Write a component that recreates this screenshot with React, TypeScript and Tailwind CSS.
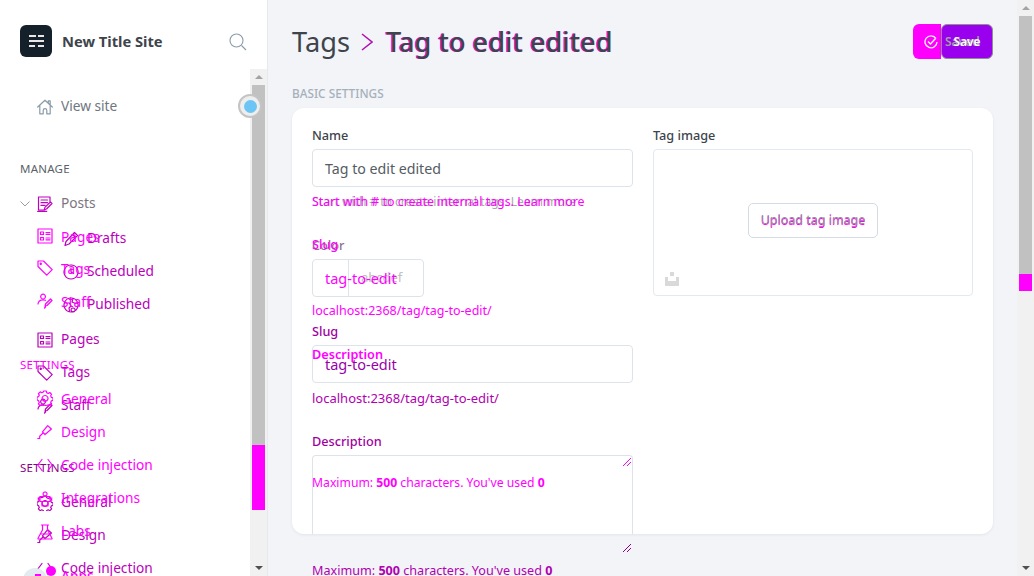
import type { ReactNode } from 'react'

const font = "font-['Noto_Sans',sans-serif]"

function Glyph({ name, className }: { name: string; className: string }) {
  const common = { fill: 'none', stroke: 'currentColor', strokeWidth: 1.2, strokeLinecap: 'round' as const, strokeLinejoin: 'round' as const }
  return (
    <svg viewBox="0 0 16 16" className={className} {...common}>
      {name === 'home' && <path d="M.7 8 8 1.2 15.300 8M2.800 6.500v8.300h3.400v-3.400a1.800 1.800 0 0 1 3.600 0v3.400h3.400V6.500M11.300 3.500V1.800h1.900v3.500" />}
      {name === 'post' && <path d="M13 6V1H1.500v13h6M4 4h6.500M4 6.700h6.500M4 9.400h4M15 7.500 9.500 13l-2.200.8.600-2.400 5.500-5.400ZM.7 15.400h9" />}
      {name === 'page' && <path d="M1 1h14v14H1ZM3.500 4h3v2.500h-3ZM3.500 9.500h3V12h-3ZM9 4.500h4M9 6.300h4M9 10h4M9 11.800h4" />}
      {name === 'tag' && <path d="M1 1h5.500l8.700 8.700-5.500 5.500L1 6.500ZM3.700 3.200a.6.6 0 1 0 .1 0" />}
      {name === 'staff' && <path d="M6 1.200a2.400 2.400 0 1 0 .1 0M1 11c.3-2.800 2-4.200 5-4.200 1 0 1.800.2 2.500.5M15 7.500l-5 5-2 .8.500-2.300 5-5ZM7.500 15l1-1" />}
      {name === 'pen' && <path d="M10.700 1.600 14.400 5 8 10.500 5.500 7.900ZM6 9l-3.300 3.200v2.300H.8" />}
      {name === 'gear' && <path d="m6.700 1 2.600 0 .4 1.700 1.600.7 1.500-.9 1.800 1.800-.9 1.500.7 1.600 1.600.4v2.600l-1.600.4-.7 1.600.9 1.500-1.800 1.800-1.500-.9-1.600.7-.4 1.600H6.700l-.4-1.600-1.600-.7-1.500.9-1.800-1.800.9-1.500-.7-1.600L0 9.700V7.100l1.600-.4.7-1.600-.9-1.500 1.800-1.800 1.500.9 1.600-.7ZM8 5.500a2.900 2.900 0 1 0 .1 0" />}
      {name === 'code' && <path d="M5 2.500 .8 8 5 13.500M11 2.500 15.200 8 11 13.500" />}
      {name === 'labs' && <path d="M4.500 1h7M5.500 1v5L1 14.200c-.3.500 0 .8.500.8h13c.5 0 .8-.3.5-.8L10.500 6V1M3.500 10h9" />}
      {name === 'int' && <path d="M8 1a2 2 0 1 0 .1 0M3 5.500h10v5H3ZM1 7h2M1 9h2M13 7h2M13 9h2M5 10.500V15h6v-4.500" />}
      {name === 'draft' && <path d="M11.500 1.500 14.500 4.500 6 13l-4 1.500L3 10.500ZM9.500 3.500l3 3" />}
      {name === 'clock' && <path d="M8 1a7 7 0 1 0 .1 0M8 4v4l2.500 1.500" />}
      {name === 'pub' && <path d="M8 1a7 7 0 1 0 .1 0M1.500 6h5l1.500 3-2 2 .5 3M10 1.500 9 5l3.500 1.500 2-.5M10 11a2 2 0 1 0 .1 0" />}
    </svg>
  )
}

function NavRow({ icon, label, tone, sub }: { icon: string; label: string; tone: string; sub?: boolean }) {
  return (
    <div className={`flex h-[33px] items-center ${tone} ${sub ? 'pl-[26px]' : ''}`}>
      <Glyph name={icon} className="h-4 w-4" />
      <span className="ml-[8px] text-[13.7px]">{label}</span>
    </div>
  )
}

function Ghost({ top, left, children, className = '' }: { top: number; left: number; children: ReactNode; className?: string }) {
  // overlay of the second capture, it sits on top of the page
  return (
    <div className={`absolute whitespace-nowrap text-[#ff00ff] ${className}`} style={{ top, left }}>
      {children}
    </div>
  )
}

function Scrollbar({ thumb, pink }: { thumb: string; pink: string }) {
  return (
    <div className="flex h-full w-[17px] shrink-0 flex-col items-center bg-[#f1f1f1]">
      <div className="flex h-4 items-center"><div className="h-0 w-0 border-x-[4px] border-b-[4px] border-x-transparent border-b-[#a3a3a3]" /></div>
      <div className={`w-[13px] bg-[#c1c1c1] ${thumb}`} />
      <div className={`w-[13px] bg-[#ff00ff] ${pink}`} />
      <div className="flex-1" />
      <div className="flex h-4 items-center"><div className="h-0 w-0 border-x-[4px] border-t-[4px] border-x-transparent border-t-[#505050]" /></div>
    </div>
  )
}

function Sidebar() {
  const mix = 'text-[#bb00bb]'
  return (
    <aside className="relative flex h-full w-[268px] shrink-0 flex-col overflow-hidden border-r border-[#e6e9ee] bg-white">
      <div className="flex h-[69px] shrink-0 items-start pl-5 pr-[20px] pt-[25px]">
        <div className="flex h-8 w-8 flex-col items-center justify-center gap-[3px] rounded-[6px] bg-[#15212a]">
          <div className="flex gap-[2px]"><i className="h-[2px] w-[7px] bg-[#e8e8e8]" /><i className="h-[2px] w-[6px] bg-[#e8e8e8]" /></div>
          <div className="h-[2px] w-[15px] bg-[#e8e8e8]" />
          <div className="flex gap-[3px]"><i className="h-[2px] w-[6px] bg-[#e8e8e8]" /><i className="h-[2px] w-[6px] bg-[#e8e8e8]" /></div>
        </div>
        <span className="ml-[10px] mt-[5px] text-[14.7px] font-bold text-[#3d444b]">New Title Site</span>
        <svg viewBox="0 0 18 18" className="ml-auto mt-2 h-[18px] w-[18px] text-[#8a9ba8]" fill="none" stroke="currentColor" strokeWidth="1.1"><circle cx="7.500" cy="7.500" r="6.500" /><path d="m12.500 12.500 4.500 4.500" /></svg>
      </div>
      <div className="flex min-h-0 flex-1">
        <nav className="relative min-w-0 flex-1 overflow-hidden pl-5 pt-[21px]">
          <div className="ml-[17px] flex h-[33px] items-center text-[#6f7780]">
            <Glyph name="home" className="h-4 w-4 text-[#8a9ba8]" />
            <span className="ml-[8px] text-[13.7px]">View site</span>
          </div>
          <div className="mt-[40px] flex h-[12px] items-center text-[11.5px] tracking-[0.02em] text-[#5b6269]">MANAGE</div>
          <div className="mt-[12px] flex h-[33px] items-center text-[#7c7580]">
            <svg viewBox="0 0 10 6" className="mr-[7px] h-[6px] w-[10px] text-[#a09aa5]" fill="none" stroke="currentColor"><path d="m.5.5 4.500 4.500L9.500.5" /></svg>
            <span className="text-[#c000c0]"><Glyph name="post" className="h-4 w-4" /></span>
            <span className="ml-[8px] text-[13.7px]">Posts</span>
          </div>
          <div className="ml-[17px]">
            <div className="mt-[2px]"><NavRow icon="draft" label="Drafts" tone={mix} sub /></div>
            <NavRow icon="clock" label="Scheduled" tone={mix} sub />
            <NavRow icon="pub" label="Published" tone={mix} sub />
            <div className="mt-[2px]"><NavRow icon="page" label="Pages" tone={mix} /></div>
            <NavRow icon="tag" label="Tags" tone={mix} />
            <NavRow icon="staff" label="Staff" tone={mix} />
          </div>
          <div className="mt-[40px] flex h-[12px] items-center text-[11.5px] tracking-[0.02em] text-[#880088]">SETTINGS</div>
          <div className="ml-[17px] mt-[12px]">
            <NavRow icon="gear" label="General" tone={mix} />
            <NavRow icon="pen" label="Design" tone={mix} />
            <NavRow icon="code" label="Code injection" tone={mix} />
          </div>
        </nav>
        <Scrollbar thumb="h-[360px]" pink="h-[65px]" />
      </div>

      {/* focus ring on the sidebar scrollbar */}
      <div className="absolute left-[238px] top-[94px] flex h-6 w-6 items-center justify-center rounded-full border-2 border-[#c4c4c4] bg-[#eeeeee]">
        <div className="h-[13px] w-[13px] rounded-full bg-[#6cc5f5]" />
      </div>

      <Ghost top={228} left={37}><Glyph name="page" className="h-4 w-4" /></Ghost>
      <Ghost top={227} left={61} className="text-[13.7px]">Pages</Ghost>
      <Ghost top={260} left={37}><Glyph name="tag" className="h-4 w-4" /></Ghost>
      <Ghost top={259} left={61} className="text-[13.7px]">Tags</Ghost>
      <Ghost top={293} left={37}><Glyph name="staff" className="h-4 w-4" /></Ghost>
      <Ghost top={292} left={61} className="text-[13.7px]">Staff</Ghost>
      <Ghost top={356} left={20} className="text-[11.5px] tracking-[0.02em]">SETTINGS</Ghost>
      <Ghost top={390} left={37}><Glyph name="gear" className="h-4 w-4" /></Ghost>
      <Ghost top={389} left={61} className="text-[13.7px]">General</Ghost>
      <Ghost top={424} left={37}><Glyph name="pen" className="h-4 w-4" /></Ghost>
      <Ghost top={422} left={61} className="text-[13.7px]">Design</Ghost>
      <Ghost top={457} left={37}><Glyph name="code" className="h-4 w-4" /></Ghost>
      <Ghost top={455} left={61} className="text-[13.7px]">Code injection</Ghost>
      <Ghost top={491} left={37}><Glyph name="int" className="h-4 w-4" /></Ghost>
      <Ghost top={488} left={61} className="text-[13.7px]">Integrations</Ghost>
      <Ghost top={524} left={37}><Glyph name="labs" className="h-4 w-4" /></Ghost>
      <Ghost top={521} left={61} className="text-[13.7px]">Labs</Ghost>
      <Ghost top={566} left={61} className="text-[13.7px] font-medium">Apps</Ghost>
      <div className="absolute left-[23px] top-[568px] h-6 w-6 rounded-full bg-[#e3eaf0]" />
      <div className="absolute left-[46px] top-[566px] h-[10px] w-[10px] rounded-full bg-[#ff00ff]" />
      <div className="absolute left-[35px] top-[574px] h-[2px] w-[6px] bg-[#ff00ff]" />
    </aside>
  )
}

function Content() {
  const field = 'rounded-[4px] border border-[#dde3ea] bg-white'
  const label = 'text-[12.7px] leading-[15px] font-medium'
  return (
    <main className="relative flex h-full min-w-0 flex-1 flex-col overflow-hidden bg-[#f2f4f8] pl-6 pr-6">
      <div className="flex h-[85px] shrink-0 items-start pt-[24px]">
        <h1 className="flex items-center text-[27.2px] font-medium leading-[36px] text-[#3d444b]">
          <span className="font-normal">Tags</span>
          <svg viewBox="0 0 12 18" className="ml-[11px] mr-[13px] h-[18px] w-[12px] text-[#b010b0]" fill="none" stroke="currentColor" strokeWidth="1.500"><path d="m1 1 10 8-10 8" /></svg>
          <span className="[text-shadow:-1px_0_0_#ff00ff]">Tag to edit edited</span>
        </h1>
        <button className="relative z-10 ml-auto flex h-[35px] w-[52px] items-center justify-center rounded-[6px] border border-[#8f8f8f] bg-[#9900ee] text-xs font-semibold text-white">
          <span className="absolute left-[3px] text-[#a0a0a0]">Saved</span>
          <span className="relative">Save</span>
        </button>
      </div>
      <h2 className="h-[23px] shrink-0 text-[11.8px] font-medium text-[#a5b0ba]">BASIC SETTINGS</h2>
      <section className="flex h-[426px] shrink-0 gap-5 rounded-[12px] bg-white px-5 pt-5 shadow-[0_1px_3px_rgba(30,50,80,0.08)]">
        <div className="flex w-[321px] shrink-0 flex-col [&>*]:shrink-0">
          <label className={`${label} text-[#3d444b]`}>Name</label>
          <div className={`${field} mt-[6px] flex h-[38px] items-center pl-3 pt-[2px] text-[14.2px] text-[#555c63]`}>Tag to edit edited</div>
          <p className="mt-[7px] text-[12px] leading-[16px] text-[#a9a9a9]">Start with # to create internal tags. Learn more</p>
          <label className={`${label} mt-[28px] text-[#8a708a]`}>Color</label>
          <div className={`${field} mt-[6px] flex h-[38px] w-[112px] items-center text-[13px] text-[#c0c0c0]`}>
            <div className="h-full w-[36px] border-r border-[#dde3ea]" />
            <span className="ml-[12px]">abcdef</span>
          </div>
          <label className={`${label} mt-[27px] text-[#a000a0]`}>Slug</label>
          <div className={`${field} mt-[6px] flex h-[38px] items-center pl-3 pt-[2px] text-[14.5px] text-[#9900aa]`}>tag-to-edit</div>
          <p className="mt-[7px] text-[13px] leading-[16px] text-[#b000b0]">localhost:2368/tag/tag-to-edit/</p>
          <label className={`${label} mt-[28px] text-[#a000a0]`}>Description</label>
          <div className="relative mt-[6px] h-[79px] rounded-t-[4px] border border-b-0 border-[#dde3ea] bg-white">
            <svg viewBox="0 0 10 10" className="absolute -bottom-[19px] right-0 h-[10px] w-[10px] text-[#8a008a]" fill="none" stroke="currentColor"><path d="m1 9 8-8M5 9l4-4" /></svg>
          </div>
          <p className="mt-[29px] text-[12.6px] leading-[16px] text-[#b000b0]">Maximum: <b>500</b> characters. You've used <b>0</b></p>
        </div>
        <div className="flex w-[320px] shrink-0 flex-col [&>*]:shrink-0">
          <label className={`${label} text-[#3d444b]`}>Tag image</label>
          <div className="relative mt-[6px] flex h-[147px] items-center justify-center rounded-[4px] border border-[#e3e9f0]">
            <button className="mb-[4px] h-[35px] w-[130px] rounded-[5px] border border-[#d5dbe2] text-[12.5px] text-[#9a8a9a] [text-shadow:0_1px_0_#ff00ff]">Upload tag image</button>
            <svg viewBox="0 0 14 14" className="absolute bottom-[9px] left-[11px] h-[14px] w-[14px]" fill="#d9d9d9"><path d="M5 0h4v4H5ZM0 5h3v4h8V5h3v9H0Z" /></svg>
          </div>
        </div>
      </section>

      {/* second capture laid over the first one */}
      <Ghost top={24} left={645} className="flex h-[35px] w-[28px] items-center justify-center rounded-l-[6px] bg-[#ff00ff] pl-[8px] text-white">
        <svg viewBox="0 0 14 14" className="h-[14px] w-[14px] shrink-0" fill="none" stroke="currentColor" strokeWidth="1.300"><path d="M12 3.500A6 6 0 1 0 13 7" /><path d="m4 6.500 2.500 2.500 5-5.500" /></svg>
      </Ghost>
      <Ghost top={194} left={44} className="text-[12.4px] leading-[16px]">Start with # to create internal tags. Learn more</Ghost>
      <Ghost top={237} left={44} className={label}>Slug</Ghost>
      <Ghost top={268} left={57} className="text-[14.5px]">tag-to-edit</Ghost>
      <Ghost top={303} left={44} className="text-[12.5px] leading-[16px]">localhost:2368/tag/tag-to-edit/</Ghost>
      <Ghost top={347} left={44} className={`${label} font-semibold`}>Description</Ghost>
      <Ghost top={475} left={44} className="text-[12.2px] leading-[16px]">Maximum: <b>500</b> characters. You've used <b>0</b></Ghost>
      <Ghost top={457} left={354}>
        <svg viewBox="0 0 10 10" className="h-[10px] w-[10px]" fill="none" stroke="currentColor"><path d="m1 9 8-8M5 9l4-4" /></svg>
      </Ghost>
    </main>
  )
}

export default function App() {
  return (
    <div className={`flex h-screen w-full overflow-hidden ${font}`}>
      <Sidebar />
      <Content />
      <div className="h-full shrink-0"><Scrollbar thumb="h-[258px]" pink="h-[17px]" /></div>
    </div>
  )
}
